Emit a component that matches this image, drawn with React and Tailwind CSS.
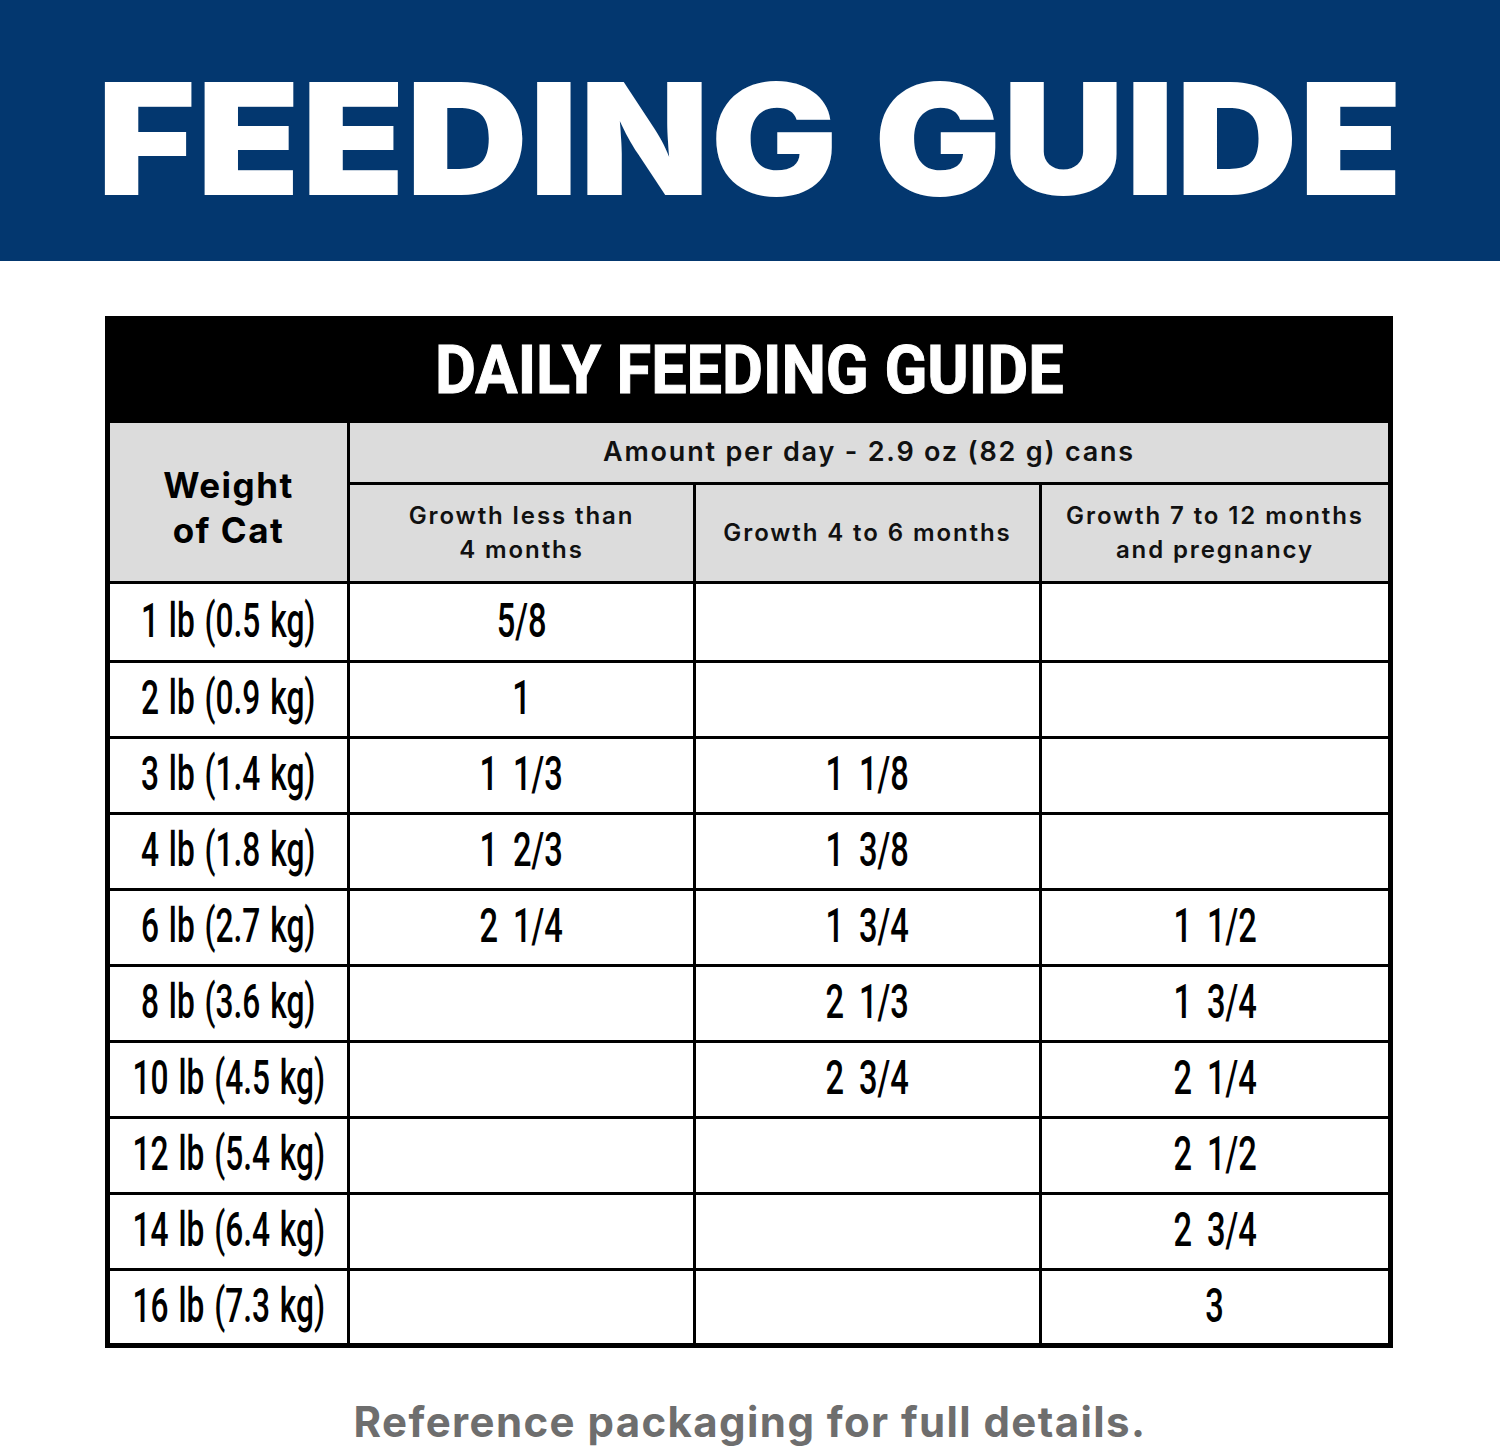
export default function App() {
  const rows = [
    ["1 lb (0.5 kg)", "5/8", "", ""],
    ["2 lb (0.9 kg)", "1", "", ""],
    ["3 lb (1.4 kg)", "1 1/3", "1 1/8", ""],
    ["4 lb (1.8 kg)", "1 2/3", "1 3/8", ""],
    ["6 lb (2.7 kg)", "2 1/4", "1 3/4", "1 1/2"],
    ["8 lb (3.6 kg)", "", "2 1/3", "1 3/4"],
    ["10 lb (4.5 kg)", "", "2 3/4", "2 1/4"],
    ["12 lb (5.4 kg)", "", "", "2 1/2"],
    ["14 lb (6.4 kg)", "", "", "2 3/4"],
    ["16 lb (7.3 kg)", "", "", "3"],
  ];
  const cond = "font-['Roboto',sans-serif] font-medium text-[48px] leading-none inline-block shrink-0 whitespace-pre mt-[-3px]";
  const sub = "bg-[#dcdcdc] border-[3px] border-black p-0 font-['Inter',sans-serif] font-semibold text-[24px] leading-[1.4] tracking-[1.9px] text-[#111]";
  return (
    <div className="w-[1500px] h-[1448px] bg-white overflow-hidden">
      <div className="h-[261px] bg-[#03376f] flex items-center justify-center">
        <h1 className="font-['Inter',sans-serif] font-black text-white text-[155px] leading-none tracking-[1px] mt-[15px] scale-x-[1.09] whitespace-nowrap">
          FEEDING GUIDE
        </h1>
      </div>
      <div className="mt-[55px] ml-[105px] w-[1288px]">
        <table className="w-full table-fixed border-collapse border-[5px] border-black">
          <colgroup>
            <col className="w-[241px]" />
            <col className="w-[346px]" />
            <col className="w-[346px]" />
            <col />
          </colgroup>
          <thead>
            <tr>
              <th colSpan={4} className="bg-black h-[103px] p-0 text-center">
                <div className="flex justify-center">
                  <span className="inline-block shrink-0 font-['Roboto',sans-serif] font-bold text-white text-[67px] leading-none scale-x-[0.94] whitespace-nowrap [-webkit-text-stroke:1px_white]">
                    DAILY FEEDING GUIDE
                  </span>
                </div>
              </th>
            </tr>
            <tr>
              <th rowSpan={2} className="bg-[#dcdcdc] border-[3px] border-black p-0 pt-[12px] font-['Inter',sans-serif] font-bold text-[35px] leading-[1.3] tracking-[1.5px] text-black">
                Weight<br />of Cat
              </th>
              <th colSpan={3} className="bg-[#dcdcdc] border-[3px] border-black h-[62px] p-0 font-['Inter',sans-serif] font-semibold text-[27px] tracking-[1.8px] text-[#111]">
                Amount per day - 2.9 oz (82 g) cans
              </th>
            </tr>
            <tr>
              <th className={`${sub} h-[99px]`}>
                Growth less than<br />4 months
              </th>
              <th className={sub}>Growth 4 to 6 months</th>
              <th className={sub}>
                Growth 7 to 12 months<br />and pregnancy
              </th>
            </tr>
          </thead>
          <tbody>
            {rows.map((r, i) => (
              <tr key={i} className={i === 0 ? "h-[79px]" : "h-[76px]"}>
                {r.map((c, j) => (
                  <td key={j} className="border-[3px] border-black p-0 text-center text-black">
                    {c ? (
                      <div className="flex justify-center">
                        <span
                          className={
                            j === 0
                              ? `${cond} scale-x-[0.66] [word-spacing:3px]`
                              : `${cond} scale-x-[0.68] [word-spacing:10px]`
                          }
                        >
                          {c}
                        </span>
                      </div>
                    ) : null}
                  </td>
                ))}
              </tr>
            ))}
          </tbody>
        </table>
      </div>
      <p className="mt-[53px] text-center font-['Inter',sans-serif] font-bold text-[42px] leading-none tracking-[1.4px] text-[#6e6e6e]">
        Reference packaging for full details.
      </p>
    </div>
  );
}
